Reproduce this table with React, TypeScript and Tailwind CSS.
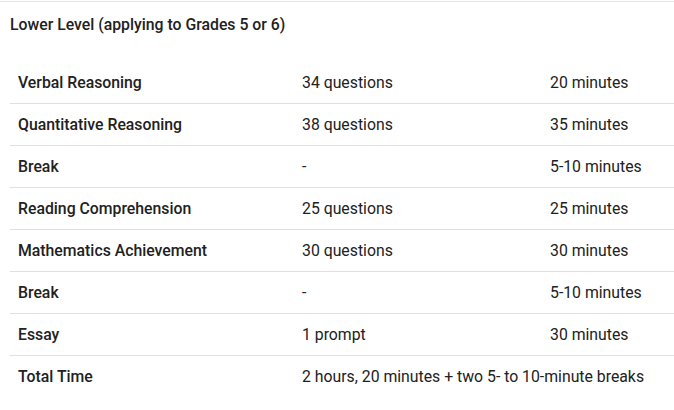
import React from "react";

const rows: [string, string, string][] = [
  ["Verbal Reasoning", "34 questions", "20 minutes"],
  ["Quantitative Reasoning", "38 questions", "35 minutes"],
  ["Break", "-", "5-10 minutes"],
  ["Reading Comprehension", "25 questions", "25 minutes"],
  ["Mathematics Achievement", "30 questions", "30 minutes"],
  ["Break", "-", "5-10 minutes"],
  ["Essay", "1 prompt", "30 minutes"],
];

export default function App() {
  return (
    <div
      className="w-[674px] h-[410px] bg-white text-[#212121] overflow-hidden"
      style={{ fontFamily: "Roboto, 'Liberation Sans', sans-serif" }}
    >
      <div className="mt-px border-t border-[#e4e4e4]" />
      <div className="pl-[10px] pt-[12px] text-[15.8px] leading-[22px] font-medium">
        Lower Level (applying to Grades 5 or 6)
      </div>
      <div className="ml-[10px] mt-[26px] text-[15.8px] leading-[20px]">
        {rows.map((r, i) => (
          <div
            key={i}
            className="grid grid-cols-[284px_248px_132px] h-[42px] items-center border-b border-[#e0e0e0]"
          >
            <div className="pl-2 font-medium">{r[0]}</div>
            <div className="pl-2">{r[1]}</div>
            <div className="pl-2">{r[2]}</div>
          </div>
        ))}
        <div className="grid grid-cols-[284px_380px] h-[42px] items-center">
          <div className="pl-2 font-medium">Total Time</div>
          <div className="pl-2">2 hours, 20 minutes + two 5- to 10-minute breaks</div>
        </div>
      </div>
    </div>
  );
}
